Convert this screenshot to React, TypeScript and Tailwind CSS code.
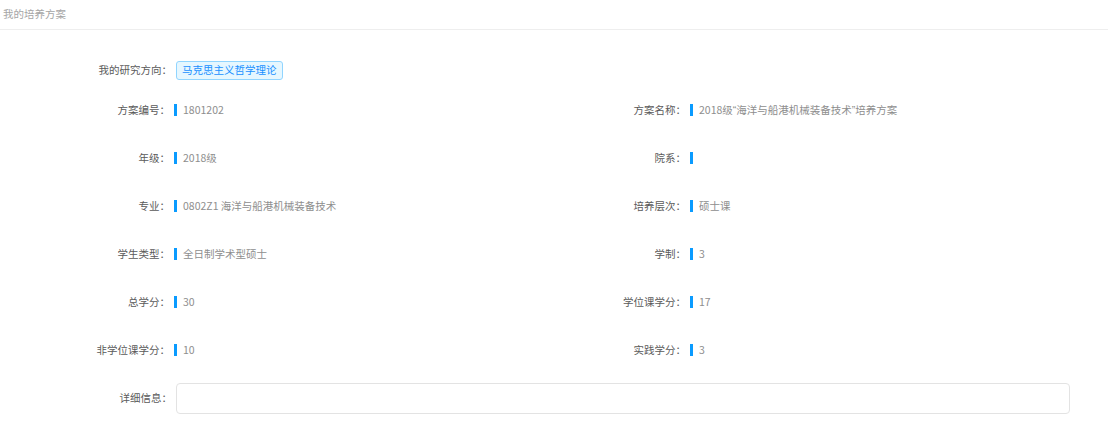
import type { ReactNode } from "react";

const q = (s: string) => <span className="font-['Liberation_Sans']">{s}</span>;

const rows: [string, ReactNode, string, ReactNode][] = [
  ["方案编号：", "1801202", "方案名称：", <>2018级{q("“")}海洋与船港机械装备技术{q("”")}培养方案</>],
  ["年级：", "2018级", "院系：", ""],
  ["专业：", "0802Z1 海洋与船港机械装备技术", "培养层次：", "硕士课"],
  ["学生类型：", "全日制学术型硕士", "学制：", "3"],
  ["总学分：", "30", "学位课学分：", "17"],
  ["非学位课学分：", "10", "实践学分：", "3"],
];

function Field({ label, value }: { label: string; value: ReactNode }) {
  return (
    <div className="flex items-center h-12">
      <div className="w-[134px] text-right text-[#5a5a5a] pr-[2px]">{label}</div>
      <span className="w-[3px] h-3 bg-[#0a9bff] ml-[2px]" />
      <span className="ml-[6px] text-[#8e8e8e]">{value}</span>
    </div>
  );
}

export default function App() {
  return (
    <div
      className="w-[1108px] h-[438px] bg-white text-[10.5px] leading-none"
      style={{ fontFamily: '"Noto Sans CJK SC", "Noto Sans", sans-serif' }}
    >
      {/* HEADER */}
      <div className="h-[30px] border-b border-[#eeeeee] flex items-center pl-[3px] text-[#a5a5a5]">
        我的培养方案
      </div>

      <div className="px-[38px] pt-[30px]">
        {/* RESEARCH */}
        <div className="flex items-center h-5">
          <div className="w-[134px] text-right text-[#5a5a5a]">我的研究方向：</div>
          <span className="ml-[4px] h-[19px] px-[5px] flex items-center rounded-[3px] border border-[#91d5ff] bg-[#e6f7ff] text-[#1890ff]">
            马克思主义哲学理论
          </span>
        </div>

        {/* INFO */}
        <div className="mt-[6px]">
          {rows.map((r) => (
            <div key={r[0]} className="grid grid-cols-2">
              <Field label={r[0]} value={r[1]} />
              <Field label={r[2]} value={r[3]} />
            </div>
          ))}
        </div>

        {/* DETAIL */}
        <div className="flex items-center mt-[9px]">
          <div className="w-[134px] text-right text-[#5a5a5a]">详细信息：</div>
          <div className="ml-[4px] flex-1 h-[31px] rounded-[4px] border border-[#e3e3e3]" />
        </div>
      </div>
    </div>
  );
}
